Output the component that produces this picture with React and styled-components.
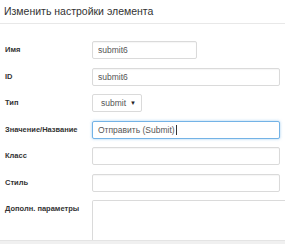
import React from 'react';
import styled, { createGlobalStyle } from 'styled-components';

const GlobalStyle = createGlobalStyle`
  html, body {
    margin: 0;
    padding: 0;
    background: #fff;
  }
  body {
    font-family: 'Liberation Sans', Arial, sans-serif;
    color: #333;
  }
`;

const Panel = styled.div`
  width: 285px;
  height: 244px;
  overflow: hidden;
  display: flex;
  flex-direction: column;
  background: #fff;
`;

const Header = styled.div`
  height: 24px;
  box-sizing: border-box;
  padding: 5px 4px 0;
  border-bottom: 1px solid #e8e8e8;
  font-size: 10.5px;
  line-height: 12px;
  color: #333;
  white-space: nowrap;
`;

const Form = styled.form`
  flex: 1;
  display: flex;
  flex-direction: column;
  gap: 8.5px;
  padding: 17px 0 0 5px;
  overflow: hidden;
`;

const Row = styled.div`
  display: grid;
  grid-template-columns: 87px 1fr;
  align-items: ${(p) => (p.$top ? 'start' : 'center')};
`;

const Label = styled.label`
  font-size: 7.5px;
  font-weight: bold;
  line-height: 18px;
  color: #333;
  white-space: nowrap;
`;

const Input = styled.input`
  box-sizing: border-box;
  width: ${(p) => p.$w || '188px'};
  height: 18px;
  padding: 0 4px 0 5px;
  border: 1px solid ${(p) => (p.$focus ? '#74b3e6' : '#dadada')};
  border-radius: 2px;
  box-shadow: ${(p) =>
    p.$focus ? '0 0 3px rgba(102, 175, 233, 0.6), inset 0 1px 1px rgba(0,0,0,0.05)' : 'inset 0 1px 1px rgba(0,0,0,0.04)'};
  font-family: 'Liberation Sans', Arial, sans-serif;
  font-size: 8.5px;
  color: #555;
  background: #fff;
  outline: none;
`;

const Select = styled.div`
  box-sizing: border-box;
  width: 50px;
  height: 18px;
  display: flex;
  align-items: center;
  justify-content: space-between;
  padding: 0 5px 0 8px;
  border: 1px solid #dadada;
  border-radius: 2px;
  font-size: 8.5px;
  color: #555;
  background: #fff;
`;

const Arrow = styled.span`
  font-size: 6px;
  color: #222;
`;

const Caret = styled.span`
  display: inline-block;
  width: 1px;
  height: 10px;
  background: #333;
  vertical-align: middle;
  margin-left: 1px;
`;

const FakeInput = styled.div`
  box-sizing: border-box;
  width: 188px;
  height: 18px;
  display: flex;
  align-items: center;
  padding: 0 4px 0 5px;
  border: 1px solid #74b3e6;
  border-radius: 2px;
  box-shadow: 0 0 3px rgba(102, 175, 233, 0.6);
  font-size: 8.5px;
  color: #555;
  background: #fff;
  white-space: nowrap;
`;

const TextArea = styled.div`
  box-sizing: border-box;
  width: 200px;
  height: 42px;
  border: 1px solid #dadada;
  border-bottom: none;
  border-radius: 2px 0 0 0;
  background: #fff;
`;

const Footer = styled.div`
  height: 3px;
  flex-shrink: 0;
  background: #f0f0f0;
  border-top: 1px solid #e4e4e4;
`;

export default function App() {
  return (
    <>
      <GlobalStyle />
      <Panel>
        <Header>Изменить настройки элемента</Header>
        <Form>
          <Row>
            <Label>Имя</Label>
            <Input $w="105px" defaultValue="submit6" />
          </Row>
          <Row>
            <Label>ID</Label>
            <Input defaultValue="submit6" />
          </Row>
          <Row>
            <Label>Тип</Label>
            <Select>
              submit <Arrow>▼</Arrow>
            </Select>
          </Row>
          <Row>
            <Label>Значение/Название</Label>
            <FakeInput>
              Отправить (Submit)<Caret />
            </FakeInput>
          </Row>
          <Row>
            <Label>Класс</Label>
            <Input />
          </Row>
          <Row>
            <Label>Стиль</Label>
            <Input />
          </Row>
          <Row $top>
            <Label>Дополн. параметры</Label>
            <TextArea />
          </Row>
        </Form>
        <Footer />
      </Panel>
    </>
  );
}
